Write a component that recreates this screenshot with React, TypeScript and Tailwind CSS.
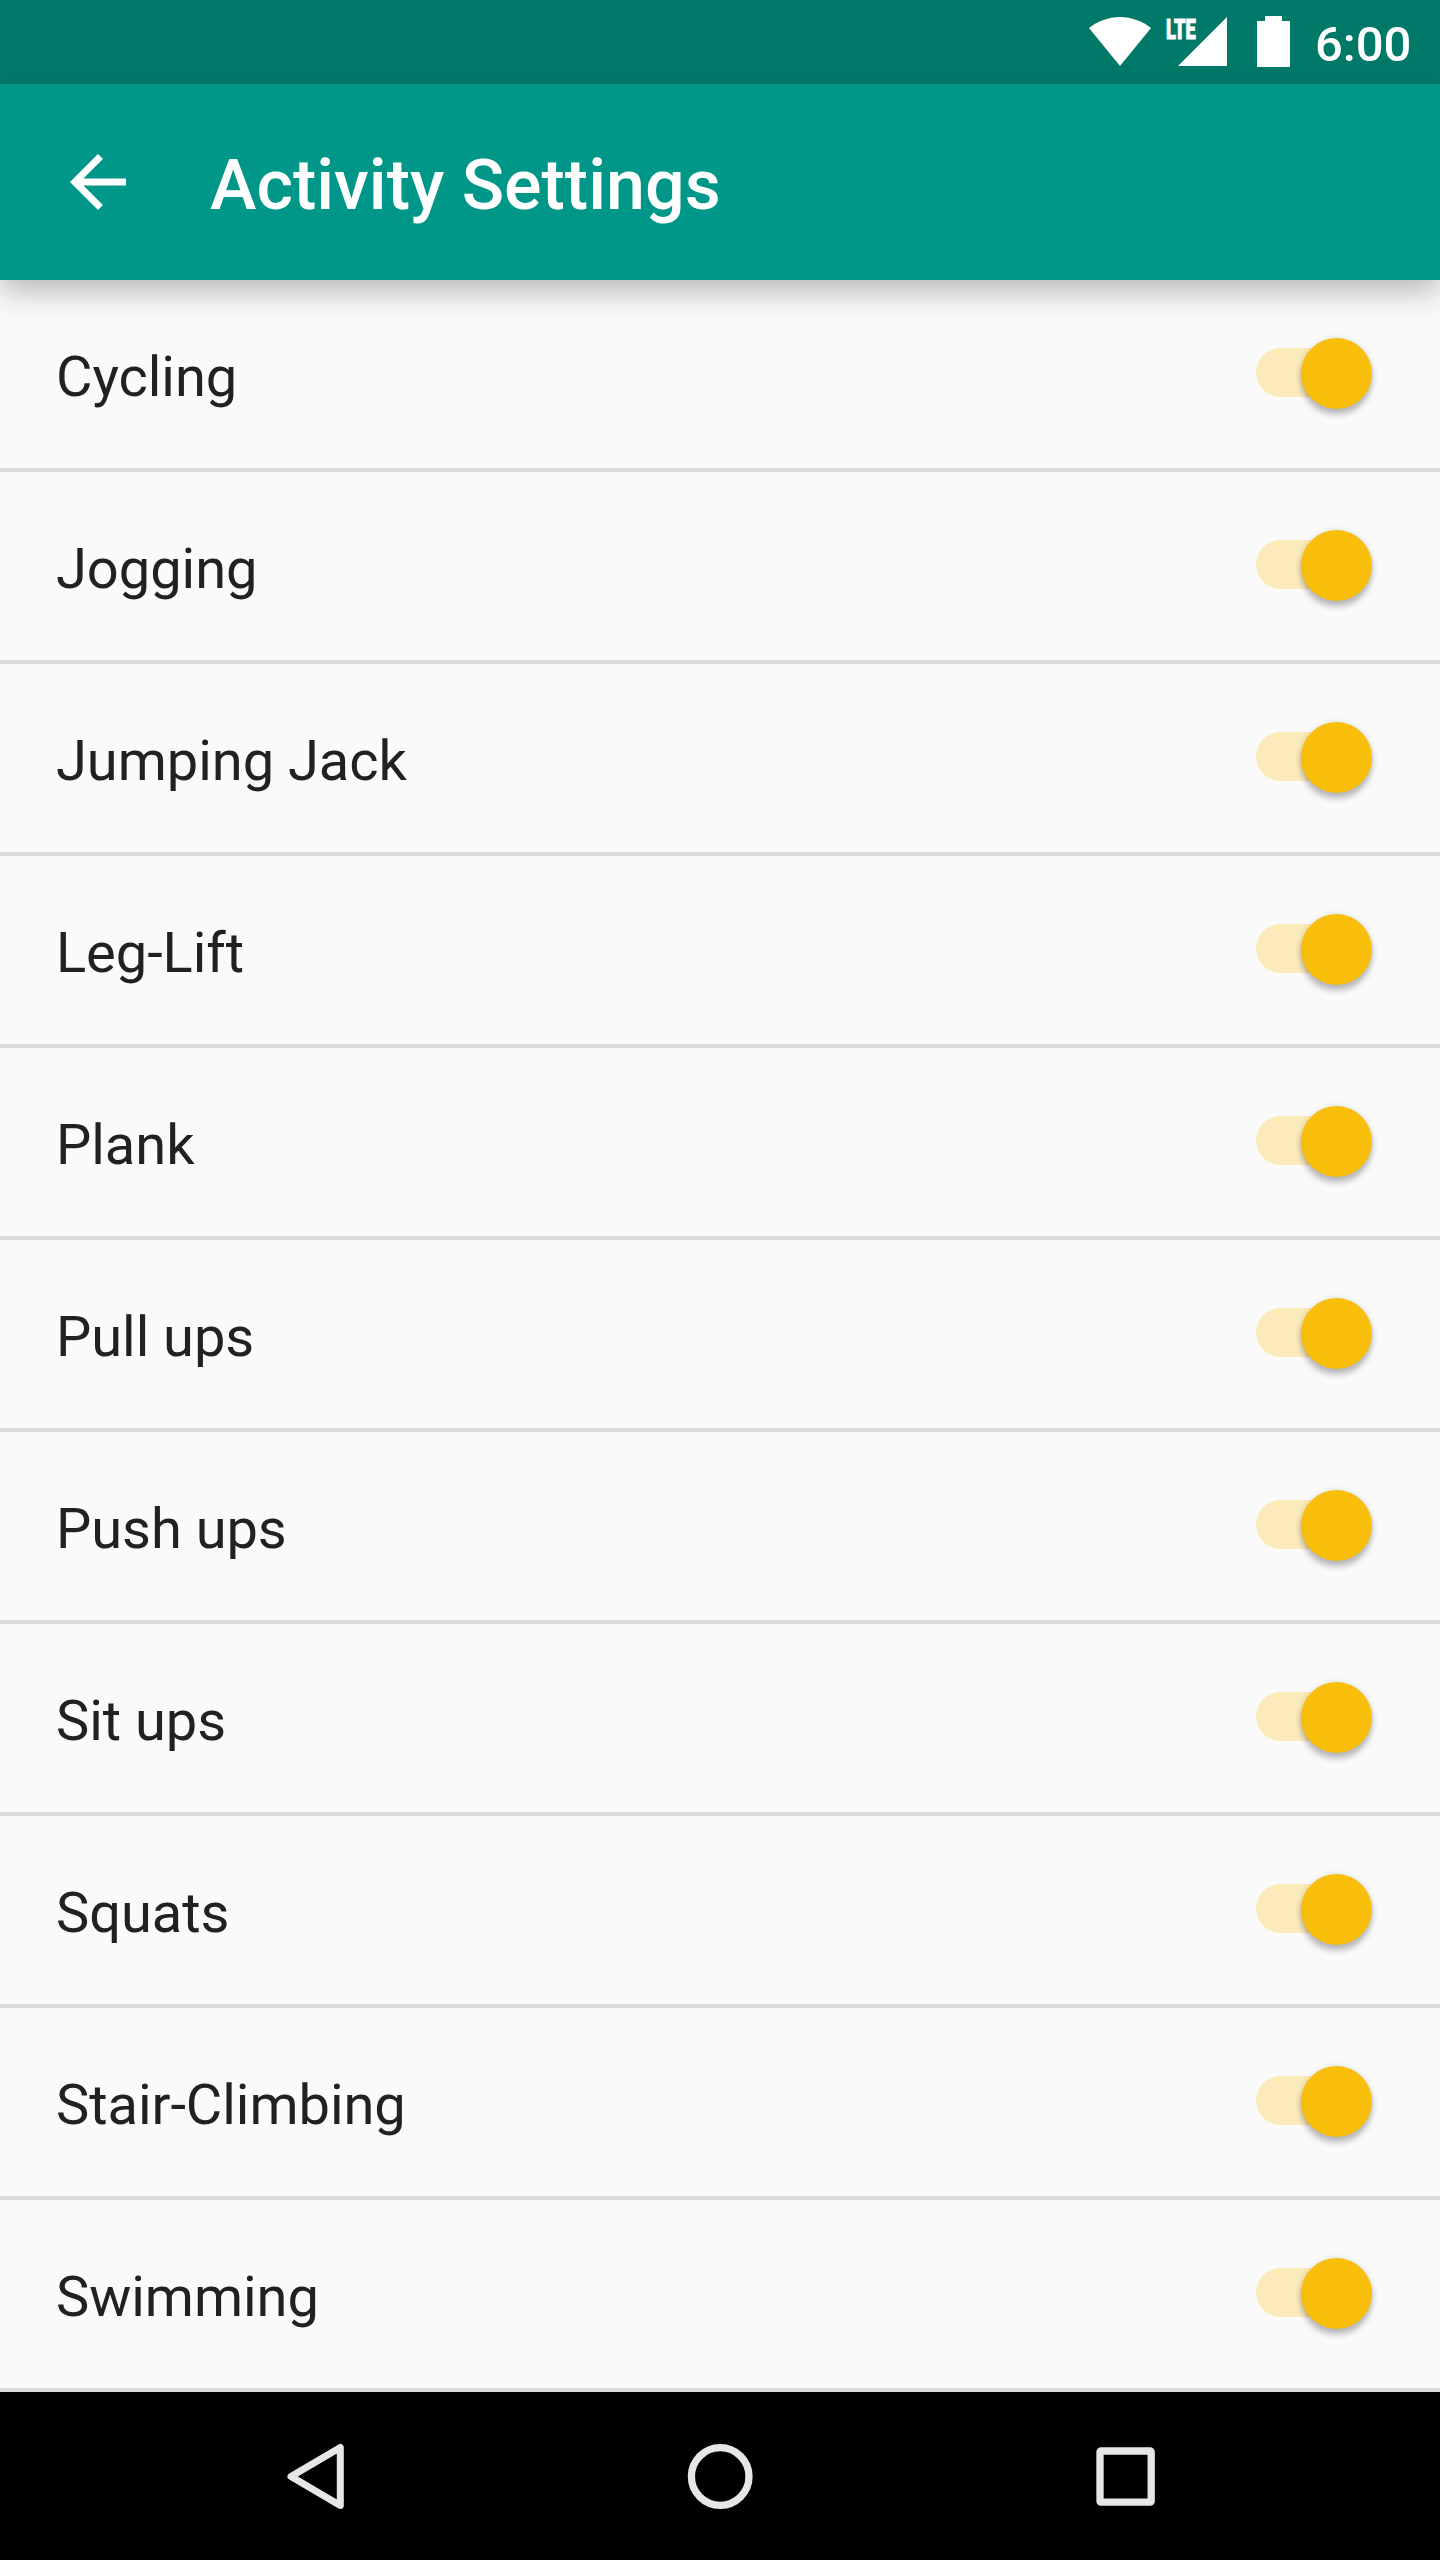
const activities = [
  "Cycling", "Jogging", "Jumping Jack", "Leg-Lift", "Plank", "Pull ups",
  "Push ups", "Sit ups", "Squats", "Stair-Climbing", "Swimming",
];

function StatusBar() {
  return (
    <div className="flex h-[84px] items-start bg-[#007969] pl-[1089px] text-white">
      <svg className="mt-[17px] h-[49px] w-[62px] shrink-0" viewBox="0 0 62 49" fill="currentColor">
        <path d="M31 49 0 11C9 4 19.500 0 31 0s22 4 31 11Z" />
      </svg>
      <div className="relative ml-[14px] mt-[17px] h-[49px] w-[62px] shrink-0">
        <svg className="ml-[13px] h-[49px] w-[49px]" viewBox="0 0 49 49" fill="currentColor">
          <path d="M49 0v49H0Z" />
        </svg>
        <span className="absolute left-px top-px origin-left scale-x-[0.65] text-[28px] leading-[24px] font-black [-webkit-text-stroke:1px_white]">LTE</span>
      </div>
      <svg className="ml-[30px] mt-4 h-[51px] w-[33px] shrink-0" viewBox="0 0 33 51" fill="currentColor">
        <path d="M8 0h17v5h8v46H0V5h8Z" />
      </svg>
      <span className="ml-[25px] mt-4 text-[49px] leading-[58px] font-medium">6:00</span>
    </div>
  );
}

function AppBar() {
  return (
    <header className="relative z-10 flex h-[196px] items-center bg-[#009788] pl-14 text-white shadow-[0_12px_28px_rgba(0,0,0,0.26)]">
      <svg className="h-[84px] w-[84px]" viewBox="0 0 24 24" fill="currentColor">
        <path d="M20 11H7.830l5.590-5.590L12 4l-8 8 8 8 1.410-1.410L7.830 13H20v-2z" />
      </svg>
      <h1 className="ml-[70px] mt-1.5 text-[70px] leading-[82px] font-medium">Activity Settings</h1>
    </header>
  );
}

function Toggle() {
  return (
    <div className="relative mb-[2px] h-[71px] w-[116px]">
      <div className="mt-[10px] h-[49px] w-[110px] rounded-full bg-[#fbebba]" />
      <div className="absolute right-0 top-0 size-[71px] rounded-full bg-[#f9be0a] shadow-[0_6px_6px_rgba(0,0,0,0.24),0_0_6px_rgba(0,0,0,0.12)]" />
    </div>
  );
}

function NavBar() {
  return (
    <nav className="flex h-[168px] items-center justify-center gap-[324px] bg-black text-[#e6e6e6]">
      <svg className="size-[80px]" viewBox="0 0 80 80" fill="none" stroke="currentColor" strokeWidth="7" strokeLinejoin="round">
        <path d="M64.300 11.500v58L15 40.500Z" />
      </svg>
      <svg className="size-[80px]" viewBox="0 0 80 80" fill="none" stroke="currentColor" strokeWidth="7.300">
        <circle cx="40.200" cy="40.500" r="28.800" />
      </svg>
      <svg className="size-[80px]" viewBox="0 0 80 80" fill="none" stroke="currentColor" strokeWidth="7.300" strokeLinejoin="round">
        <rect x="16" y="15" width="51.200" height="51.200" rx="1" />
      </svg>
    </nav>
  );
}

export default function App() {
  return (
    <div className="h-[2560px] w-[1440px] overflow-hidden bg-[#fafafa] font-[Roboto,sans-serif]">
      <StatusBar />
      <AppBar />
      <ul>
        {activities.map((name) => (
          <li key={name} className="flex h-48 items-center justify-between border-b-4 border-[#dcdcdc] pl-14 pr-[68px]">
            <span className="mt-1.5 text-[56px] leading-[66px] tracking-[-0.04px] text-[#212121]">{name}</span>
            <Toggle />
          </li>
        ))}
      </ul>
      <NavBar />
    </div>
  );
}
